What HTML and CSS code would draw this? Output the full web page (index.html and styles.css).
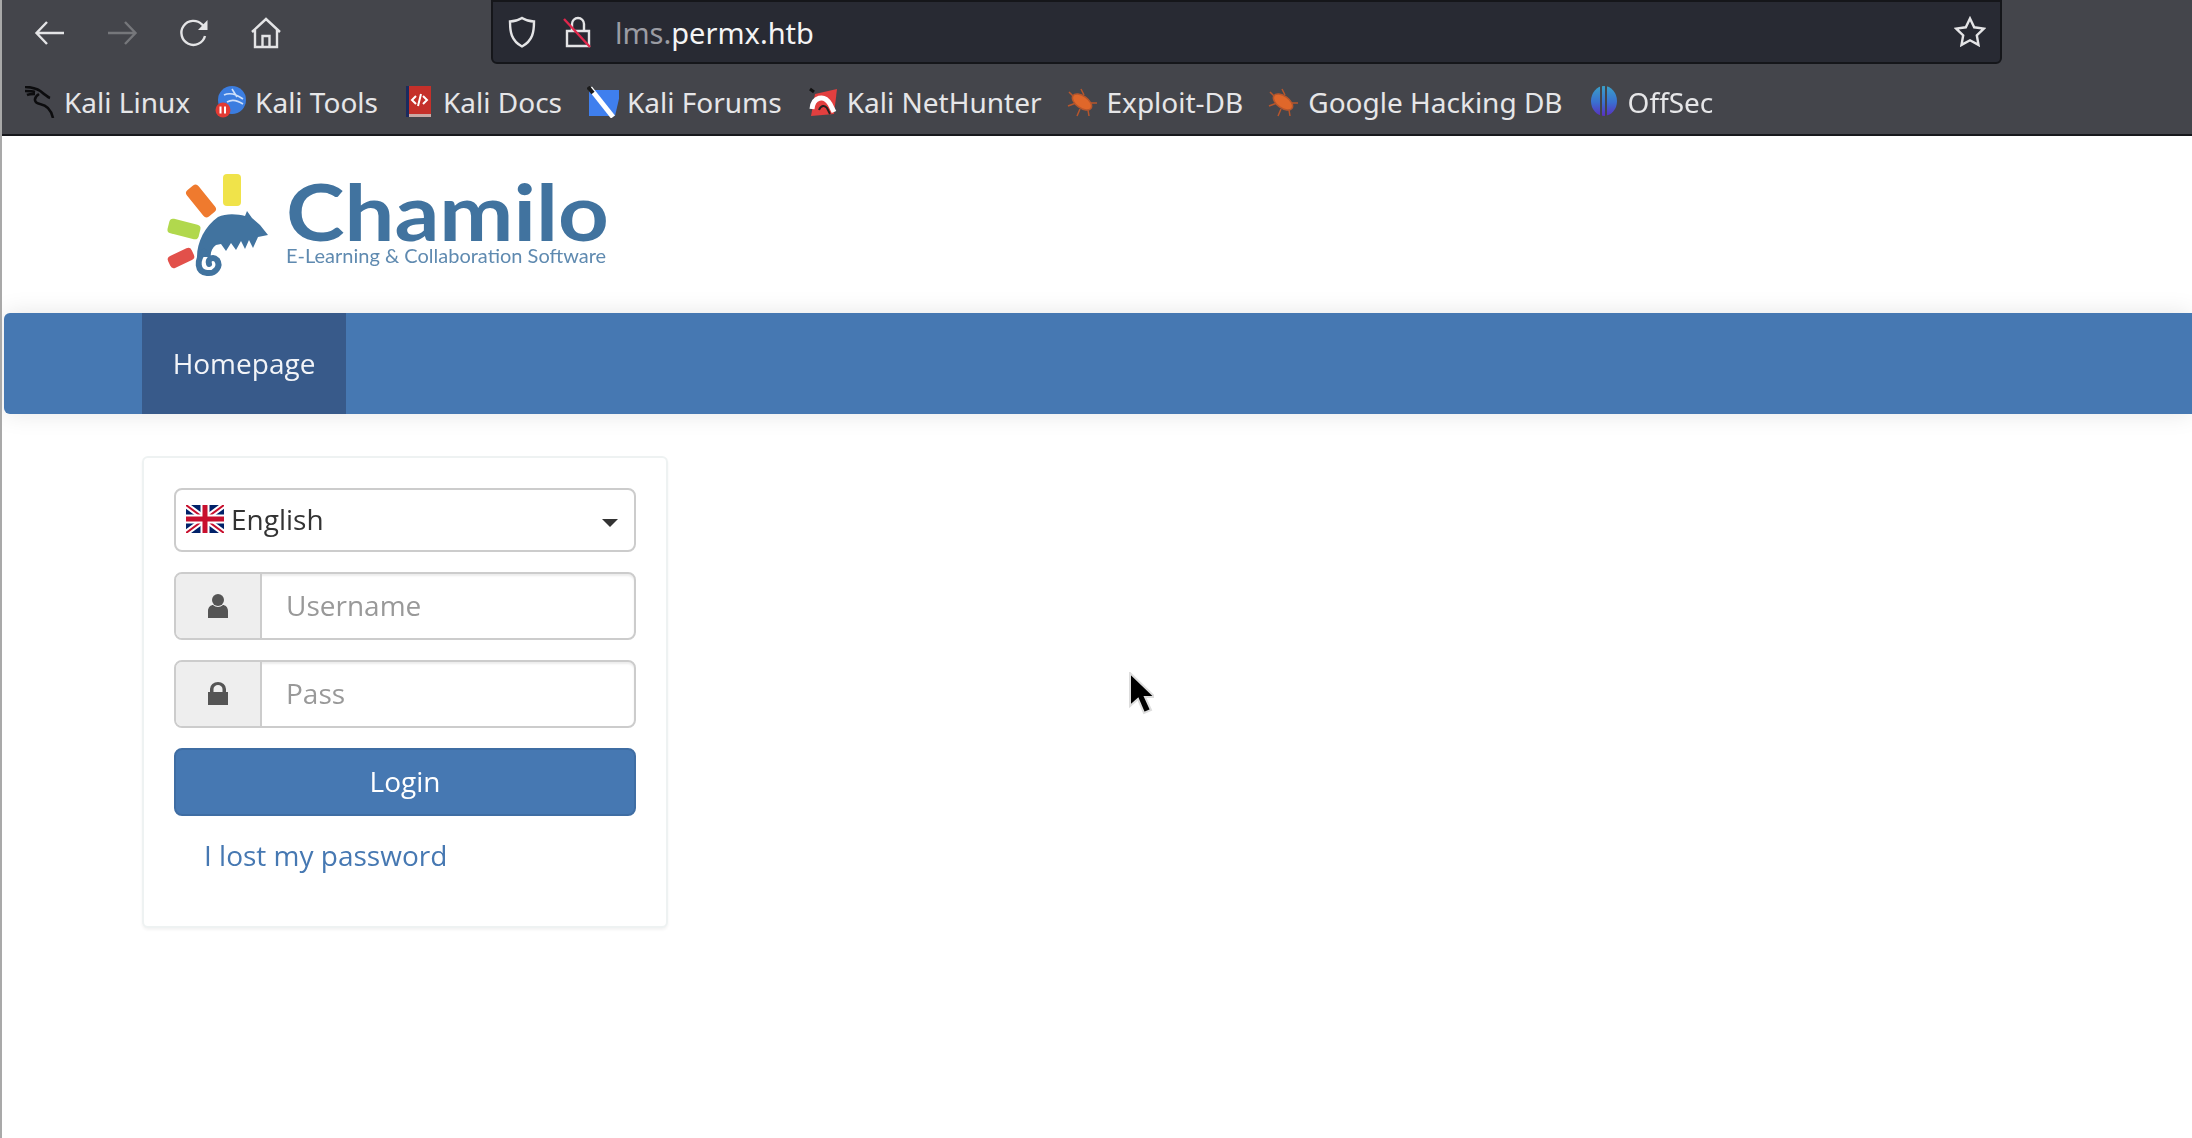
FILE: index.html
```html
<!DOCTYPE html>
<html lang="en">
<head>
<meta charset="utf-8">
<title>Chamilo</title>
<link rel="stylesheet" href="styles.css">
</head>
<body>
<div class="browser">
  <div class="toolbar">
    <div class="nav-buttons">
      <svg class="tb-icon" viewBox="0 0 32 32"><path d="M30 16H3M13 5 2.500 16 13 27"/></svg>
      <svg class="tb-icon dim" viewBox="0 0 32 32"><path d="M2 16h27M19 5l10.500 11L19 27"/></svg>
      <svg class="tb-icon" viewBox="0 0 32 32"><path d="M27 19a12 12 0 1 1-3-11.500L28 11"/><path class="solid" d="M20 13h9.500V3z"/></svg>
      <svg class="tb-icon" viewBox="0 0 32 32"><path d="M2 15 16 2l14 13M5 13v17h22V13M12.500 30V19h7v11"/></svg>
    </div>
    <div class="urlbar">
      <svg class="url-icon" viewBox="0 0 32 32"><path d="M16 2c4 2.500 8 3.500 12 3.500 0 10-1 19-12 25C5 24.500 4 15.500 4 5.500 8 5.500 12 4.500 16 2z"/></svg>
      <svg class="url-icon lock" viewBox="0 0 32 32"><path d="M10 15V8a6 6 0 0 1 12 0v7M5 15h22v15H5z"/><path class="strike" d="M2 3l26 28"/></svg>
      <span class="url"><span class="url-dim">lms.</span>permx.htb</span>
      <svg class="star" viewBox="0 0 32 32"><path d="M16 2.500l4.200 8.800 9.600 1.300-7 6.700 1.700 9.600-8.500-4.600-8.500 4.600 1.700-9.600-7-6.700 9.600-1.300z"/></svg>
    </div>
  </div>
  <div class="bookmarks">
    <a class="bm">
      <svg class="fav" viewBox="0 0 32 32"><path class="kali" d="M1 1c8 0 14 2 19 7 2 1 3 3 6 4M1 5c3 0 7 0 10 1M3 9c2-1 5-1 8-1M15 8c-6 4-5 9 1 10 6 1 11 5 13 14"/></svg>
      <span>Kali Linux</span>
    </a>
    <a class="bm">
      <svg class="fav" viewBox="0 0 32 32"><circle cx="17" cy="14" r="14" fill="#3b7de0"/><path d="M9 9c6-3 12-1 19 4M12 16c5-3 10-2 16 2M17 3l5 8" fill="none" stroke="#cfe0fa" stroke-width="1.600"/><circle cx="8" cy="24" r="7.500" fill="#e23a33"/><path d="M5.500 20.500v7M10 20.500v7" stroke="#fff" stroke-width="2"/></svg>
      <span>Kali Tools</span>
    </a>
    <a class="bm">
      <svg class="fav" viewBox="0 0 32 32"><rect x="3" y="0" width="25" height="31" fill="#1b2a5e"/><rect x="6" y="0" width="22" height="28" fill="#c5302a"/><rect x="6" y="28" width="22" height="3" fill="#c9a9a5"/><path d="M13 10l-4 4 4 4M20 10l4 4-4 4M18 8l-3 12" fill="none" stroke="#fff" stroke-width="2"/></svg>
      <span>Kali Docs</span>
    </a>
    <a class="bm">
      <svg class="fav" viewBox="0 0 32 32"><path d="M2 4h32l-6 26H2z" fill="#3f7fee"/><path d="M3 2l23 29" stroke="#fff" stroke-width="5"/><path d="M1 1l5 6" stroke="#1a1a1a" stroke-width="4"/></svg>
      <span>Kali Forums</span>
    </a>
    <a class="bm">
      <svg class="fav" viewBox="0 0 32 32"><path d="M8 8 30 3 27 28 4 30z" fill="#e23f3f"/><path d="M5 23c1-12 12-15 18-5l4 8" fill="none" stroke="#fff" stroke-width="5"/><path d="M12 24c2-5 6-5 8-2l3 6" fill="none" stroke="#222" stroke-width="2"/><path d="M3 3l4 3" stroke="#111" stroke-width="3"/></svg>
      <span>Kali NetHunter</span>
    </a>
    <a class="bm">
      <svg class="fav" viewBox="0 0 32 32"><g class="bug"><path d="M2 6 9 13M14 3l3 6M1 20l8-3M10 30l3-7M22 30l-1-6M30 17h-6"/><ellipse cx="15" cy="16" rx="11" ry="6" transform="rotate(35 15 16)"/></g></svg>
      <span>Exploit-DB</span>
    </a>
    <a class="bm">
      <svg class="fav" viewBox="0 0 32 32"><g class="bug"><path d="M2 6 9 13M14 3l3 6M1 20l8-3M10 30l3-7M22 30l-1-6M30 17h-6"/><ellipse cx="15" cy="16" rx="11" ry="6" transform="rotate(35 15 16)"/></g></svg>
      <span>Google Hacking DB</span>
    </a>
    <a class="bm">
      <svg class="fav" viewBox="0 0 32 32"><defs><linearGradient id="off" x1="0" y1="0" x2="0" y2="1"><stop offset="0" stop-color="#3aa0c8"/><stop offset="0.550" stop-color="#3a6fd0"/><stop offset="1" stop-color="#5a2fc0"/></linearGradient></defs><ellipse cx="16" cy="15" rx="13" ry="15" fill="url(#off)"/><path d="M13 0v31M18 0v31" stroke="#43444a" stroke-width="2"/></svg>
      <span>OffSec</span>
    </a>
  </div>
</div>

<main class="page">
  <header class="site-header">
    <svg class="logo-mark" viewBox="0 0 134 130">
      <rect x="73" y="14" width="18" height="32" rx="4" fill="#f0e34a"/>
      <rect x="-17" y="-7.500" width="34" height="15" rx="4" fill="#ef7a2e" transform="translate(51 41) rotate(51)"/>
      <rect x="-16" y="-7.500" width="32" height="15" rx="4" fill="#b1d84d" transform="translate(34 69) rotate(14)"/>
      <rect x="-13" y="-6.500" width="26" height="13" rx="4" fill="#e2504a" transform="translate(31 98) rotate(-25)"/>
      <path fill="#41739f" d="M68 57C76 53 88 54 95 56L97 51 102 58 110 65 118 75 108 77 103 88 99 80 95 89 91 81 86 90 81 83 76 91 71 84 66 85C62 88 60 93 61 97L47 97C47 82 55 66 68 57z"/>
      <path class="tail" d="M54 92C46 100 47 112 57 113 66 114 71 106 67 100 63 96 57 99 59 104"/>
    </svg>
    <div class="logo-text">
      <span class="logo-name">Chamilo</span>
      <span class="logo-tag">E-Learning &amp; Collaboration Software</span>
    </div>
  </header>
  <nav class="menu">
    <a class="menu-item">Homepage</a>
  </nav>
  <section class="card">
    <div class="lang">
      <svg class="flag" viewBox="0 0 38 28">
        <rect width="38" height="28" fill="#012169"/>
        <path d="M0 0l38 28M38 0 0 28" stroke="#fff" stroke-width="6"/>
        <path d="M0 0l38 28M38 0 0 28" stroke="#c8102e" stroke-width="2"/>
        <path d="M19 0v28M0 14h38" stroke="#fff" stroke-width="9"/>
        <path d="M19 0v28M0 14h38" stroke="#c8102e" stroke-width="5"/>
      </svg>
      <span class="lang-name">English</span>
      <span class="caret"></span>
    </div>
    <div class="field">
      <span class="addon">
        <svg class="addon-icon" viewBox="0 0 20 24"><circle cx="10" cy="6" r="6"/><path d="M0 24v-7c0-4 3-6 5-6 1.500 1 3 2 5 2s3.500-1 5-2c2 0 5 2 5 6v7z"/></svg>
      </span>
      <span class="ph">Username</span>
    </div>
    <div class="field">
      <span class="addon">
        <svg class="addon-icon" viewBox="0 0 20 24"><path d="M0 10h2V7a8 7 0 0 1 16 0v3h2v13H0zM5.500 10h9V7a4.500 4 0 0 0-9 0z" fill-rule="evenodd"/></svg>
      </span>
      <span class="ph">Pass</span>
    </div>
    <button class="login">Login</button>
    <a class="lost">I lost my password</a>
  </section>
</main>

<svg class="cursor" viewBox="0 0 26 44"><path d="M2 1v33l8-7 6 14 7-3-6-13h10z" fill="#000" stroke="#ddd" stroke-width="2"/></svg>
</body>
</html>
```

FILE: styles.css
```css
* { box-sizing: border-box; }
html, body { margin: 0; height: 100%; }
body {
  background: #fff;
  border-left: 2px solid #a9a9a9;
  font-family: "Open Sans", "Noto Sans", sans-serif;
  font-size: 28px;
  color: #333;
  overflow: hidden;
  position: relative;
  filter: blur(0.5px);
}
.browser {
  margin-left: -2px;
  height: 136px;
  background: #44454b;
  border-bottom: 2px solid #17181c;
}
.toolbar { display: flex; height: 64px; }
.nav-buttons {
  display: flex;
  gap: 40px;
  width: 491px;
  padding: 17px 0 0 34px;
}
.tb-icon { width: 32px; height: 32px; fill: none; stroke: #e4e4e6; stroke-width: 2.400; }
.tb-icon.dim { stroke: #76777b; }
.tb-icon .solid { fill: #e4e4e6; stroke: none; }
.urlbar {
  width: 1511px;
  height: 64px;
  background: #282a33;
  border: 2px solid #15161a;
  border-radius: 0 0 6px 6px;
  display: flex;
  align-items: center;
  padding: 0 14px 0 13px;
  color: #f4f4f5;
}
.url-icon { width: 32px; height: 32px; fill: none; stroke: #e4e4e6; stroke-width: 2.400; flex: none; }
.url-icon.lock { margin-left: 24px; }
.strike { stroke: #e0274c; }
.url {
  font-family: "Noto Sans", sans-serif;
  font-size: 29px;
  margin-left: 21px;
  flex: 1;
}
.url-dim { color: #9b9ca3; }
.star { width: 32px; height: 32px; fill: none; stroke: #e4e4e6; stroke-width: 2.400; }
.bookmarks {
  display: flex;
  align-items: center;
  gap: 25px;
  height: 70px;
  padding: 6px 0 0 24px;
  font-family: "Noto Sans", sans-serif;
  font-size: 28px;
  color: #e6e6e8;
}
.bm { display: flex; align-items: center; gap: 8px; }
.fav { width: 32px; height: 32px; flex: none; }
.kali { fill: none; stroke: #0c0c0e; stroke-width: 2.600; }
.bug { fill: #e0672a; stroke: #b7562c; stroke-width: 1.500; }
.page { display: flex; flex-direction: column; }
.site-header { display: flex; height: 177px; padding: 24px 0 0 148px; }
.logo-mark { display: block; width: 134px; height: 130px; flex: none; }
.tail { fill: none; stroke: #41739f; stroke-width: 6; stroke-linecap: round; }
.logo-text {
  display: flex;
  flex-direction: column;
  align-items: flex-start;
  margin: 0 0 0 2px;
  padding-top: 18px;
  color: #41739f;
  font-family: "Lato", sans-serif;
  white-space: nowrap;
}
.logo-name {
  font-size: 79px;
  font-weight: 700;
  line-height: 66px;
  transform: scaleX(1.120);
  transform-origin: left center;
}
.logo-tag {
  font-size: 20px;
  line-height: 22px;
  color: #5f8ab0;
}
.menu {
  height: 101px;
  margin-left: 2px;
  padding-left: 138px;
  background: #4678b2;
  border-radius: 6px 0 0 6px;
  box-shadow: 0 0 24px rgba(0, 0, 0, 0.1);
  display: flex;
}
.menu-item {
  width: 204px;
  background: #385a8a;
  color: #f2f4f8;
  display: flex;
  align-items: center;
  justify-content: center;
  padding-bottom: 2px;
}
.card {
  width: 526px;
  height: 472px;
  margin: 42px 0 0 140px;
  padding: 30px;
  background: #fff;
  border: 2px solid #eef2f2;
  border-radius: 6px;
  box-shadow: 0 2px 3px rgba(0, 0, 0, 0.05);
  display: flex;
  flex-direction: column;
}
.lang {
  height: 64px;
  border: 2px solid #ccc;
  border-radius: 8px;
  display: flex;
  align-items: center;
  padding: 0 16px 2px 10px;
  margin-bottom: 20px;
}
.flag { width: 38px; height: 28px; flex: none; }
.lang-name { margin-left: 7px; flex: 1; }
.caret {
  width: 0;
  height: 0;
  margin-top: 8px;
  border-left: 8px solid transparent;
  border-right: 8px solid transparent;
  border-top: 8px solid #333;
}
.field {
  height: 68px;
  margin-bottom: 20px;
  border: 2px solid #ccc;
  border-radius: 8px;
  display: flex;
  align-items: center;
  box-shadow: inset 0 2px 2px rgba(0, 0, 0, 0.075);
}
.addon {
  width: 86px;
  height: 100%;
  background: #eee;
  border-right: 2px solid #ccc;
  border-radius: 6px 0 0 6px;
  display: flex;
  align-items: center;
  justify-content: center;
}
.addon-icon { width: 20px; height: 24px; fill: #555; }
.ph { margin-left: 24px; padding-bottom: 2px; color: #999; }
.login {
  height: 68px;
  background: #4678b2;
  border: 2px solid #3f6da3;
  border-radius: 8px;
  color: #fff;
  font-family: inherit;
  font-size: 28px;
  padding: 0 0 2px;
}
.lost {
  margin: 19px 0 0 30px;
  color: #4678b2;
  line-height: 40px;
}
.cursor {
  position: absolute;
  left: 1126px;
  top: 672px;
  width: 26px;
  height: 44px;
}
```
